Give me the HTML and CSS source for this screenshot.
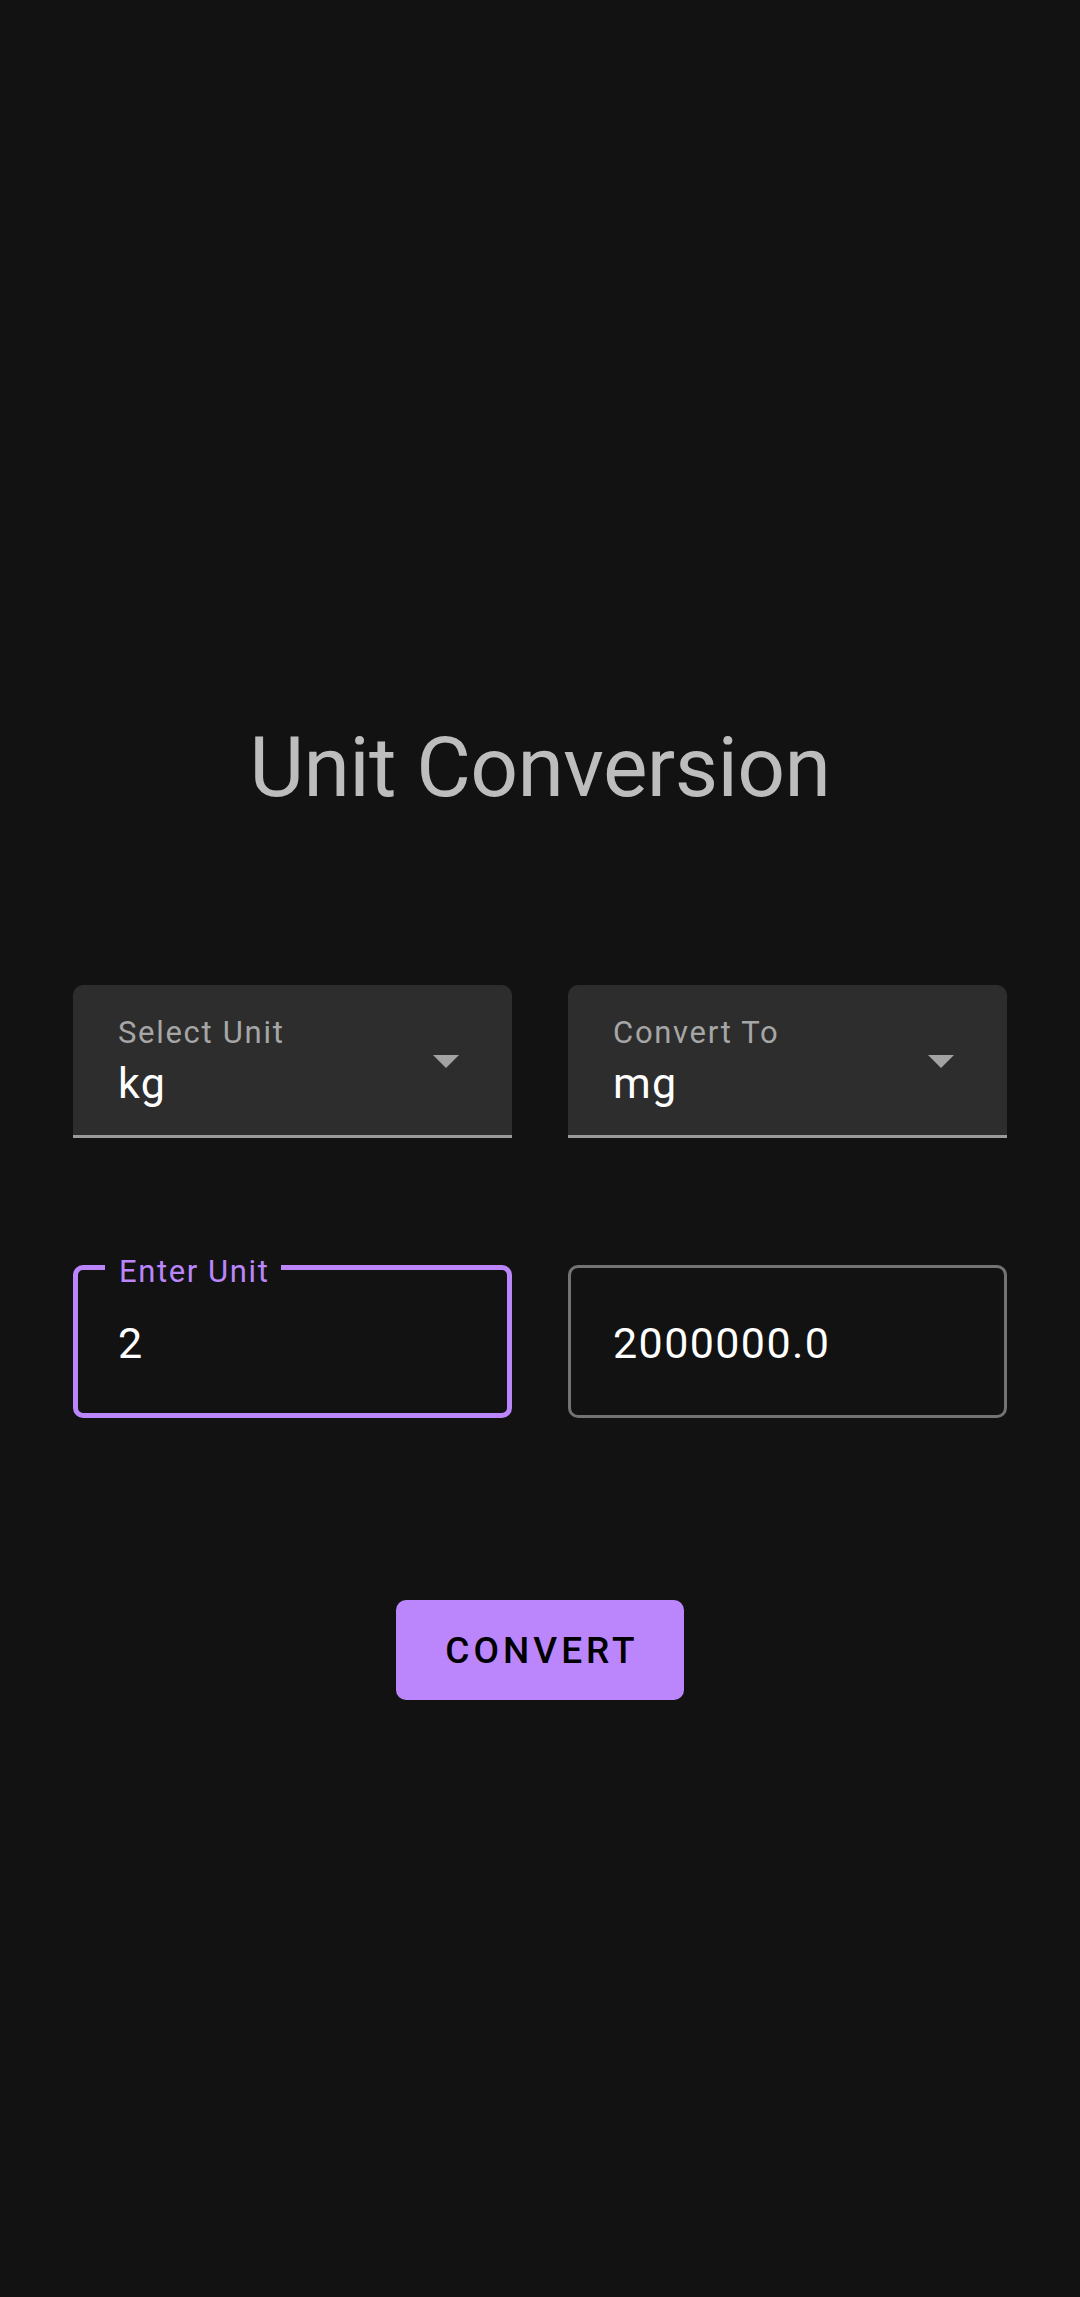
FILE: index.html
```html
<!DOCTYPE html>
<html>
<head>
<meta charset="utf-8">
<link rel="stylesheet" href="styles.css">
</head>
<body>
<main class="screen">
  <h1 class="title">Unit Conversion</h1>
  <div class="row selects">
    <div class="filled">
      <div class="filled-text">
        <span class="filled-label">Select Unit</span>
        <span class="filled-value">kg</span>
      </div>
      <svg class="arrow" width="26" height="13" viewBox="0 0 26 13"><path d="M0 0h26L13 13z" fill="#a3a3a3"/></svg>
    </div>
    <div class="filled">
      <div class="filled-text">
        <span class="filled-label">Convert To</span>
        <span class="filled-value">mg</span>
      </div>
      <svg class="arrow" width="26" height="13" viewBox="0 0 26 13"><path d="M0 0h26L13 13z" fill="#a3a3a3"/></svg>
    </div>
  </div>
  <div class="row inputs">
    <div class="outlined focused">
      <span class="float-label">Enter Unit</span>
      <span class="outlined-value">2</span>
    </div>
    <div class="outlined">
      <span class="outlined-value">2000000.0</span>
    </div>
  </div>
  <div class="actions">
    <button class="btn">CONVERT</button>
  </div>
</main>
</body>
</html>
```
FILE: styles.css
```css
html, body {
  margin: 0;
  padding: 0;
  background: #121212;
}
body {
  width: 1080px;
  height: 2297px;
  font-family: Roboto, "Noto Sans", sans-serif;
}
.screen {
  display: flex;
  flex-direction: column;
  padding: 726px 73px 0;
}
.title {
  margin: 0;
  font-size: 84px;
  line-height: 84px;
  font-weight: 400;
  color: #bdbdbd;
  text-align: center;
  letter-spacing: -0.6px;
}
.row {
  display: grid;
  grid-template-columns: 439px 439px;
  column-gap: 56px;
}
.selects {
  margin-top: 175px;
}
.filled {
  box-sizing: border-box;
  height: 153px;
  background: #2d2d2d;
  border-radius: 10px 10px 0 0;
  border-bottom: 3px solid #9a9a9a;
  display: flex;
  align-items: center;
  padding: 0 53px 0 45px;
}
.filled-text {
  flex: 1;
  display: flex;
  flex-direction: column;
  align-self: flex-start;
  padding-top: 29px;
}
.filled-label {
  font-size: 31px;
  line-height: 37px;
  color: #a6a6a6;
  letter-spacing: 1.7px;
}
.filled-value {
  margin-top: 8px;
  font-size: 43px;
  line-height: 49px;
  color: #ffffff;
  letter-spacing: 1.4px;
}
.arrow {
  display: block;
  margin-top: 2px;
}
.inputs {
  margin-top: 127px;
}
.outlined {
  position: relative;
  box-sizing: border-box;
  height: 153px;
  border: 3px solid #737373;
  border-radius: 10px;
  display: flex;
  align-items: center;
  padding: 4px 0 0 42px;
}
.outlined.focused {
  border: 5px solid #bb86fc;
  padding-left: 40px;
}
.float-label {
  position: absolute;
  left: 27px;
  top: -17px;
  padding: 0 12px 0 14px;
  background: #121212;
  font-size: 31px;
  line-height: 37px;
  color: #bb86fc;
  letter-spacing: 1.6px;
}
.outlined-value {
  font-size: 43px;
  line-height: 49px;
  color: #ffffff;
  letter-spacing: 1.4px;
}
.actions {
  display: flex;
  justify-content: center;
  margin-top: 182px;
}
.btn {
  width: 288px;
  height: 100px;
  border: none;
  border-radius: 10px;
  background: #bb86fc;
  color: #000000;
  font-family: Roboto, "Noto Sans", sans-serif;
  font-weight: 500;
  font-size: 37px;
  letter-spacing: 4px;
  padding: 0 0 0 4px;
  cursor: pointer;
}
```
